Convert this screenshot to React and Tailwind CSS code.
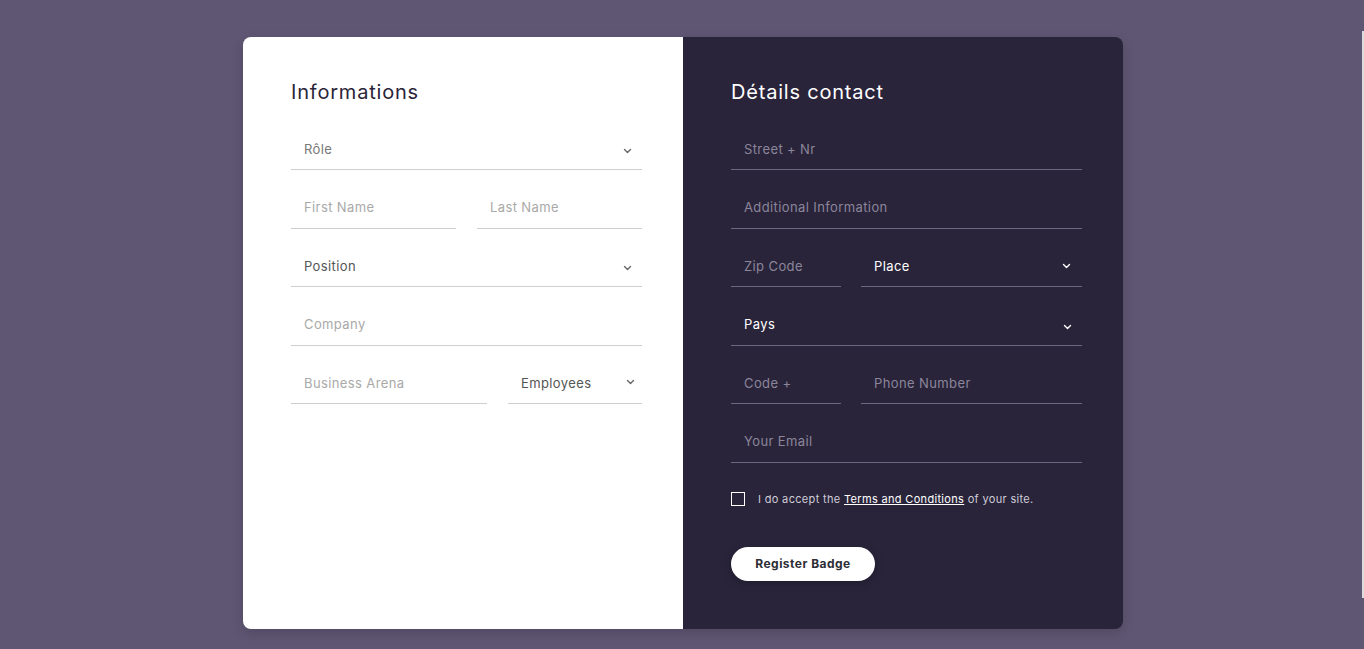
import React from 'react'

const font = { fontFamily: 'Inter, "Open Sans", sans-serif' }

function Chevron({ className = '' }) {
  return (
    <svg width="9" height="6" viewBox="0 0 9 6" fill="none" stroke="currentColor" strokeWidth="1.4" className={className}>
      <path d="M1.5 1.5l3 3 3-3" strokeLinecap="round" strokeLinejoin="round" />
    </svg>
  )
}

function Field({ placeholder, dark, className = '' }) {
  return (
    <div className={`h-10 flex items-center border-b ${dark ? 'border-[#6c667e]' : 'border-[#cfcfcf]'} ${className}`}>
      <input
        placeholder={placeholder}
        className={`w-full bg-transparent outline-none px-[13px] text-[13px] tracking-[0.03em] ${dark ? 'text-white placeholder:text-[#8c869b]' : 'text-[#555] placeholder:text-[#a9a9a9]'}`}
      />
    </div>
  )
}

function Select({ label, dark, color, className = '', chevron = '' }) {
  return (
    <div className={`h-10 flex items-center justify-between pl-[13px] pr-[10px] border-b ${dark ? 'border-[#6c667e]' : 'border-[#cfcfcf]'} ${className}`}>
      <span className={`text-[13px] tracking-[0.03em] ${color}`}>{label}</span>
      <Chevron className={`${dark ? 'text-white' : 'text-[#666]'} ${chevron}`} />
    </div>
  )
}

export default function App() {
  return (
    <div className="relative min-h-[649px] bg-[#5f5673] flex justify-center pt-[37px] pl-[2px]" style={font}>
      <div className="w-[880px] h-[592px] flex rounded-lg overflow-hidden shadow-[0_4px_12px_rgba(0,0,0,0.15)]">
        {/* Left */}
        <div className="w-[440px] bg-white pl-12 pr-[41px] pt-[41px]">
          <h2 className="text-[20px] leading-7 font-normal tracking-[0.04em] text-[#2a2438] mb-6">Informations</h2>
          <div className="flex flex-col gap-[18.5px]">
            <Select label="Rôle" color="text-[#777]" chevron="mt-[3px]" />
            <div className="flex gap-[21px]">
              <Field placeholder="First Name" className="flex-1" />
              <Field placeholder="Last Name" className="flex-1" />
            </div>
            <Select label="Position" color="text-[#555]" chevron="mt-[3px]" />
            <Field placeholder="Company" />
            <div className="flex gap-[21px]">
              <Field placeholder="Business Arena" className="w-[196px]" />
              <Select label="Employees" color="text-[#555]" className="flex-1 !pr-[7px]" chevron="-mt-[4px]" />
            </div>
          </div>
        </div>

        {/* Right */}
        <div className="w-[440px] bg-[#29243a] pl-12 pr-[41px] pt-[41px]">
          <h2 className="text-[20px] leading-7 font-normal tracking-[0.04em] text-white mb-6">Détails contact</h2>
          <div className="flex flex-col gap-[18.5px]">
            <Field placeholder="Street + Nr" dark />
            <Field placeholder="Additional Information" dark />
            <div className="flex gap-5">
              <Field placeholder="Zip Code" dark className="w-[110px]" />
              <Select label="Place" dark color="text-white" className="flex-1 !pr-[11px]" chevron="-mt-[2px]" />
            </div>
            <Select label="Pays" dark color="text-white" className="!pr-[10px]" chevron="mt-[3px]" />
            <div className="flex gap-5">
              <Field placeholder="Code +" dark className="w-[110px]" />
              <Field placeholder="Phone Number" dark className="flex-1" />
            </div>
            <Field placeholder="Your Email" dark />
          </div>

          <label className="flex items-center mt-[28px]">
            <span className="w-[14px] h-[14px] border border-white shrink-0" />
            <span className="ml-[13px] text-[11px] tracking-[0.03em] text-[#d0ccd8]">
              I do accept the <span className="underline text-white">Terms and Conditions</span> of your site.
            </span>
          </label>

          <button className="mt-10 h-[34px] w-[144px] rounded-full bg-white text-[12px] font-bold tracking-[0.04em] text-[#2d2d35] shadow-[0_2px_8px_rgba(0,0,0,0.25)]">
            Register Badge
          </button>
        </div>
      </div>
      <div className="absolute right-0 top-[31px] h-[567px] w-[2px] bg-[#dcdcdc]" />
    </div>
  )
}
